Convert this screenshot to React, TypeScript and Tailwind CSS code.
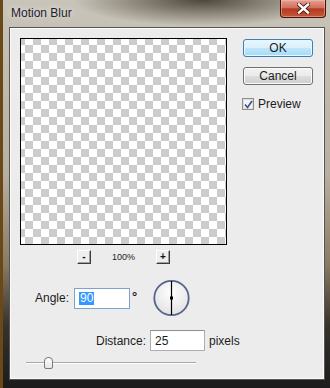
import React from 'react';

const CloseButton = () => (
  <div className="w-[46px] h-[18px] self-start mr-[-1px] rounded-b-[4px] border border-t-0 border-[#3d150c] flex items-center justify-center shadow-[inset_0_0_0_1px_rgba(255,200,190,0.45)] [background-image:linear-gradient(to_bottom,#e4a091,#d0705c_45%,#b53a20_52%,#c5563a_100%)]">
    <svg width="13" height="11" viewBox="0 0 13 11">
      <path d="M2 1.5 L11 9.5 M11 1.5 L2 9.5" stroke="#4a1a10" strokeWidth="4.2" strokeLinecap="square" />
      <path d="M2 1.5 L11 9.5 M11 1.5 L2 9.5" stroke="#ffffff" strokeWidth="2.4" strokeLinecap="square" />
    </svg>
  </div>
);

const ZoomButton = ({ label }: { label: string }) => (
  <div className="w-[14px] h-[14px] bg-[#eeeeee] border border-t-white border-l-white border-r-[#3c3c3c] border-b-[#3c3c3c] shadow-[inset_-1px_-1px_0_#a0a0a0] flex items-center justify-center text-[10px] font-bold leading-none text-[#111]">
    {label}
  </div>
);

const AngleDial = () => (
  <svg width="37" height="38" viewBox="0 0 37 38">
    <defs>
      <radialGradient id="dialFill" cx="50%" cy="35%" r="65%">
        <stop offset="0%" stopColor="#ffffff" />
        <stop offset="100%" stopColor="#e2e2e2" />
      </radialGradient>
    </defs>
    <circle cx="18.5" cy="19" r="17.2" fill="url(#dialFill)" stroke="#56668c" strokeWidth="1.8" />
    <line x1="18.5" y1="2" x2="18.5" y2="36" stroke="#000" strokeWidth="1.2" />
    <rect x="17" y="17.5" width="3" height="3" fill="#000" />
  </svg>
);

export default function App() {
  return (
    <div className="w-[330px] h-[388px] overflow-hidden flex flex-col pl-[6px] pr-[5px] pb-[8px] border-l-[3px] border-[#6a4818] font-['Liberation_Sans',Arial,sans-serif] [background-image:radial-gradient(ellipse_130px_26px_at_200px_0px,#4d463a,transparent),linear-gradient(to_bottom,#c9c4b9_0%,#b7af9f_45%,#8a7b63_68%,#37322b_84%,#1c1c1c_100%)]">
      {/* Title bar */}
      <div className="h-[27px] shrink-0 flex justify-between">
        <span className="mt-[5px] ml-[2px] text-[12px] leading-[16px] text-[#1a2230] [text-shadow:0_0_6px_rgba(255,255,255,0.9)]">
          Motion Blur
        </span>
        <CloseButton />
      </div>

      {/* Client area */}
      <div className="flex-1 bg-[#ececec] border border-[#555555] shadow-[inset_0_0_0_1px_#fbfbfb] pt-[10px] pl-[10px] text-[12px] text-[#1c1c1c]">
        <div className="flex items-start">
          {/* Preview */}
          <div className="w-[207px] h-[207px] shrink-0 border border-black [background-image:conic-gradient(#cccccc_25%,#ffffff_0_50%,#cccccc_0_75%,#ffffff_0)] [background-size:16px_16px] [background-position:-4px_6px]" />

          {/* Buttons */}
          <div className="ml-[16px] mt-px flex flex-col">
            <button className="w-[70px] h-[18px] rounded-[3px] border border-[#3c7fb1] shadow-[inset_0_0_0_1px_#e8f6fd] flex items-center justify-center leading-none [background-image:linear-gradient(to_bottom,#eaf6fd,#d9f0fc_50%,#bee6fd_51%,#a7d9f5)]">
              OK
            </button>
            <button className="mt-[10px] w-[70px] h-[18px] rounded-[3px] border border-[#707070] shadow-[inset_0_0_0_1px_#fcfcfc] flex items-center justify-center leading-none [background-image:linear-gradient(to_bottom,#f2f2f2,#ebebeb_50%,#dddddd_51%,#cfcfcf)]">
              Cancel
            </button>
            <label className="mt-[13px] ml-[-1px] flex items-center">
              <span className="w-[12px] h-[12px] border border-[#8e8f8f] bg-[#f4f4f4] shadow-[inset_0_0_0_1px_#dcdcdc] flex items-center justify-center">
                <svg width="9" height="9" viewBox="0 0 9 9">
                  <path d="M1 4.5 L3.5 7.5 L8 1" fill="none" stroke="#3b4f8a" strokeWidth="1.6" />
                </svg>
              </span>
              <span className="ml-[4px] leading-none">Preview</span>
            </label>
          </div>
        </div>

        {/* Zoom controls */}
        <div className="mt-[5px] w-[207px] flex justify-center items-center gap-[21px]">
          <ZoomButton label="-" />
          <span className="w-[23px] text-center text-[9px] leading-none">100%</span>
          <ZoomButton label="+" />
        </div>

        {/* Angle */}
        <div className="mt-[15px] ml-[15px] flex items-center">
          <span className="w-[39px]">Angle:</span>
          <div className="w-[56px] h-[21px] border border-[#7da2ce] bg-white flex items-center pl-[4px]">
            <span className="bg-[#3399ff] text-white leading-[13px] px-px">90</span>
          </div>
          <span className="w-[23px] pl-[2px] mt-[-4px] text-[13px] font-bold leading-none">°</span>
          <AngleDial />
        </div>

        {/* Distance */}
        <div className="mt-[13px] ml-[76px] flex items-center">
          <span className="w-[54px]">Distance:</span>
          <div className="w-[55px] h-[21px] border border-[#abadb3] border-t-[#8e9096] bg-white flex items-center pl-[4px]">
            25
          </div>
          <span className="ml-[4px]">pixels</span>
        </div>

        {/* Slider */}
        <div className="relative mt-[6px] ml-[6px] w-[170px] h-[12px]">
          <div className="absolute left-0 right-0 top-[5px] h-[2px] border-t border-[#a8a8a8] bg-white" />
          <div className="absolute left-[18px] top-0 w-[9px] h-[12px] rounded-t-[4px] rounded-b-[2px] border border-[#7a7a7a] [background-image:linear-gradient(to_bottom,#ffffff,#e4e4e4)]" />
        </div>
      </div>
    </div>
  );
}
